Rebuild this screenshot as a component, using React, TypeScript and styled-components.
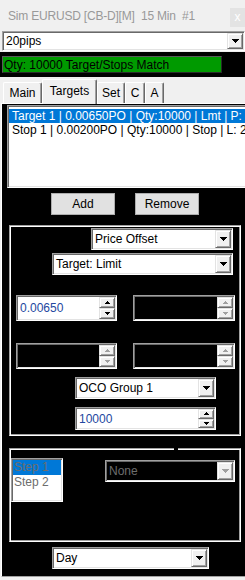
import React from 'react';
import styled, { createGlobalStyle, css } from 'styled-components';

const GlobalStyle = createGlobalStyle`
  html, body {
    margin: 0;
    padding: 0;
    background: #000;
  }
  body {
    width: 245px;
    height: 580px;
    overflow: hidden;
    font-family: "Liberation Sans", Arial, sans-serif;
    font-size: 12px;
    color: #000;
  }
  * { box-sizing: border-box; }
`;

/* classic win32 3d edges */
const sunken = css`
  border-style: solid;
  border-width: 1px;
  border-color: #a0a0a0 #fff #fff #a0a0a0;
  box-shadow: inset 1px 1px 0 #696969, inset -1px -1px 0 #e3e3e3;
  padding: 1px;
`;

const raised = css`
  border-style: solid;
  border-width: 1px;
  border-color: #e3e3e3 #696969 #696969 #e3e3e3;
  box-shadow: inset 1px 1px 0 #fff, inset -1px -1px 0 #a0a0a0;
  background: #f0f0f0;
`;

const Window = styled.div`
  width: 245px;
  height: 580px;
  background: #000;
  display: flex;
  flex-direction: column;
  overflow: hidden;
`;

const Header = styled.div`
  background: #f0f0f0;
  height: 52px;
  display: flex;
  flex-direction: column;
`;

const TitleRow = styled.div`
  height: 31px;
  display: flex;
  align-items: center;
  justify-content: space-between;
  padding-left: 8px;
`;

const TitleText = styled.span`
  color: #999;
  white-space: pre;
  letter-spacing: -0.2px;
`;

const CloseBox = styled.span`
  width: 15px;
  height: 19px;
  margin-top: 3px;
  background: #e3e3e3;
  color: #fff;
  font-size: 12px;
  display: flex;
  align-items: center;
  justify-content: center;
`;

const Combo = styled.div<{ $w: number; $h?: number; $ml?: number; $mt?: number; $off?: boolean }>`
  ${sunken};
  width: ${(p) => p.$w}px;
  height: ${(p) => p.$h ?? 22}px;
  margin-left: ${(p) => p.$ml ?? 0}px;
  margin-top: ${(p) => p.$mt ?? 0}px;
  background: ${(p) => (p.$off ? '#000' : '#fff')};
  color: ${(p) => (p.$off ? '#6d6d6d' : '#000')};
  display: flex;
  flex-shrink: 0;
`;

const ComboText = styled.span<{ $num?: boolean }>`
  flex: 1;
  min-width: 0;
  padding-left: 2px;
  display: flex;
  align-items: center;
  white-space: nowrap;
  overflow: hidden;
  color: ${(p) => (p.$num ? '#2447a0' : 'inherit')};
`;

const DropBtn = styled.span`
  ${raised};
  width: 16px;
  display: flex;
  align-items: center;
  justify-content: center;
`;

const SpinCol = styled.span`
  width: 16px;
  display: flex;
  flex-direction: column;
`;

const SpinBtn = styled.span`
  ${raised};
  flex: 1;
  display: flex;
  align-items: center;
  justify-content: center;
`;

const StatusBar = styled.div`
  margin: 4px 0 4px 2px;
  width: 220px;
  height: 17px;
  background: #009a00;
  border: 1px solid;
  border-color: #5a5a5a #2a2a2a #2a2a2a #5a5a5a;
  padding-left: 1px;
  display: flex;
  align-items: center;
  white-space: nowrap;
`;

const TabControl = styled.div`
  flex: 1;
  background: #f0f0f0;
  display: flex;
  flex-direction: column;
  padding: 0 0 3px 1px;
`;

const TabStrip = styled.div`
  height: 26px;
  display: flex;
  align-items: flex-end;
  padding-left: 2px;
`;

const Tab = styled.span<{ $w: number; $active?: boolean }>`
  width: ${(p) => p.$w}px;
  height: ${(p) => (p.$active ? 25 : 21)}px;
  margin-bottom: ${(p) => (p.$active ? -1 : 0)}px;
  position: relative;
  z-index: ${(p) => (p.$active ? 2 : 1)};
  background: #f0f0f0;
  border-top: 1px solid #fff;
  border-left: 1px solid #fff;
  border-right: 1px solid #696969;
  border-radius: 2px 2px 0 0;
  box-shadow: inset -1px 0 0 #a0a0a0;
  display: flex;
  align-items: center;
  justify-content: center;
  padding-bottom: ${(p) => (p.$active ? 2 : 0)}px;
`;

const Page = styled.div`
  flex: 1;
  background: #000;
  border-top: 1px solid #fff;
  border-left: 1px solid #fff;
  border-bottom: 1px solid #a0a0a0;
  display: flex;
  flex-direction: column;
  align-items: flex-start;
`;

const ListBox = styled.div`
  ${sunken};
  margin: 1px 0 0 5px;
  width: 250px;
  height: 83px;
  flex-shrink: 0;
  background: #fff;
  padding-top: 3px;
  overflow: hidden;
`;

const ListItem = styled.div<{ $sel?: boolean }>`
  height: 14px;
  line-height: 14px;
  padding-left: 3px;
  white-space: nowrap;
  background: ${(p) => (p.$sel ? '#0078d7' : 'transparent')};
  color: ${(p) => (p.$sel ? '#fff' : '#000')};
`;

const ButtonRow = styled.div`
  display: flex;
  gap: 20px;
  margin: 5px 0 0 49px;
`;

const Button = styled.button`
  width: 64px;
  height: 22px;
  padding: 0;
  background: #e1e1e1;
  border: 1px solid #adadad;
  font-family: inherit;
  font-size: 12px;
  color: #000;
`;

const Group = styled.div<{ $h: number; $mt: number }>`
  position: relative;
  margin: ${(p) => p.$mt}px 0 0 7px;
  width: 232px;
  height: ${(p) => p.$h}px;
  flex-shrink: 0;
  border-style: solid;
  border-width: 1px;
  border-color: #a0a0a0 #fff #fff #a0a0a0;
  box-shadow: inset 1px 1px 0 #fff, inset -1px -1px 0 #a0a0a0;
  display: flex;
  flex-direction: column;
  align-items: flex-start;
`;

const Notch = styled.span`
  position: absolute;
  left: 164px;
  top: -1px;
  width: 4px;
  height: 2px;
  background: #000;
`;

const PairRow = styled.div<{ $mt: number }>`
  display: flex;
  gap: 16px;
  margin: ${(p) => p.$mt}px 0 0 6px;
`;

const SideRow = styled.div`
  display: flex;
  align-items: flex-start;
  margin: 9px 0 0 1px;
`;

const StepList = styled.div`
  ${sunken};
  width: 52px;
  height: 44px;
  background: #fff;
  flex-shrink: 0;
`;

const StepItem = styled.div<{ $sel?: boolean }>`
  height: 15px;
  line-height: 15px;
  padding-left: 1px;
  color: #6d6d6d;
  background: ${(p) => (p.$sel ? '#0078d7' : 'transparent')};
`;

const Arrow = ({ dir, off, small }: { dir: 'up' | 'down'; off?: boolean; small?: boolean }) => {
  const w = small ? 5 : 7;
  const h = small ? 3 : 4;
  const pts = dir === 'down' ? `0,0 ${w},0 ${w / 2},${h}` : `0,${h} ${w},${h} ${w / 2},0`;
  return (
    <svg width={w} height={h} viewBox={`0 0 ${w} ${h}`} shapeRendering="crispEdges">
      <polygon points={pts} fill={off ? '#a0a0a0' : '#000'} />
    </svg>
  );
};

const DropDown = (props: { text: string; w: number; h?: number; ml?: number; mt?: number; off?: boolean }) => (
  <Combo $w={props.w} $h={props.h} $ml={props.ml} $mt={props.mt} $off={props.off}>
    <ComboText>{props.text}</ComboText>
    <DropBtn>
      <Arrow dir="down" off={props.off} />
    </DropBtn>
  </Combo>
);

const Spinner = (props: { value?: string; w: number; h: number; ml?: number; mt?: number; off?: boolean }) => (
  <Combo $w={props.w} $h={props.h} $ml={props.ml} $mt={props.mt} $off={props.off}>
    <ComboText $num>{props.value}</ComboText>
    <SpinCol>
      <SpinBtn>
        <Arrow dir="up" small off={props.off} />
      </SpinBtn>
      <SpinBtn>
        <Arrow dir="down" small off={props.off} />
      </SpinBtn>
    </SpinCol>
  </Combo>
);

export default function App() {
  return (
    <>
      <GlobalStyle />
      <Window>
        <Header>
          <TitleRow>
            <TitleText>{'Sim EURUSD [CB-D][M]  15 Min  #1'}</TitleText>
            <CloseBox>x</CloseBox>
          </TitleRow>
          <DropDown text="20pips" w={243} h={20} ml={2} />
        </Header>

        <StatusBar>Qty: 10000 Target/Stops Match</StatusBar>

        <TabControl>
          <TabStrip>
            <Tab $w={39}>Main</Tab>
            <Tab $w={55} $active>
              Targets
            </Tab>
            <Tab $w={28}>Set</Tab>
            <Tab $w={20}>C</Tab>
            <Tab $w={19}>A</Tab>
          </TabStrip>

          <Page>
            <ListBox>
              <ListItem $sel>Target 1 | 0.00650PO | Qty:10000 | Lmt | P: 2</ListItem>
              <ListItem>Stop 1 | 0.00200PO | Qty:10000 | Stop | L: 2</ListItem>
            </ListBox>

            <ButtonRow>
              <Button>Add</Button>
              <Button>Remove</Button>
            </ButtonRow>

            <Group $h={211} $mt={10}>
              <DropDown text="Price Offset" w={142} ml={81} mt={2} />
              <DropDown text="Target: Limit" w={181} ml={42} mt={3} />
              <PairRow $mt={20}>
                <Spinner value="0.00650" w={101} h={26} />
                <Spinner w={102} h={26} off />
              </PairRow>
              <PairRow $mt={22}>
                <Spinner w={101} h={26} off />
                <Spinner w={102} h={26} off />
              </PairRow>
              <DropDown text="OCO Group 1" w={141} ml={65} mt={8} />
              <Spinner value="10000" w={141} h={23} ml={65} mt={8} />
            </Group>

            <Group $h={94} $mt={12}>
              <Notch />
              <SideRow>
                <StepList>
                  <StepItem $sel>Step 1</StepItem>
                  <StepItem>Step 2</StepItem>
                </StepList>
                <DropDown text="None" w={130} ml={42} mt={2} off />
              </SideRow>
            </Group>

            <DropDown text="Day" w={157} ml={50} mt={5} />
          </Page>
        </TabControl>
      </Window>
    </>
  );
}
